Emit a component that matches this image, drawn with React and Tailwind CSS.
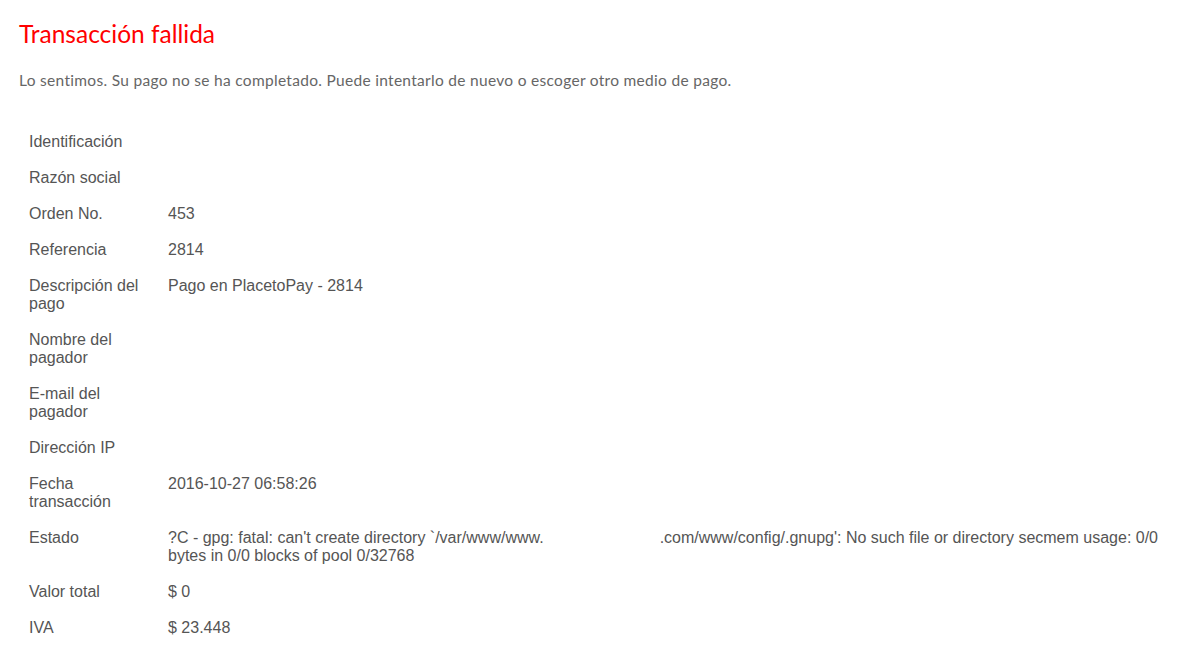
const rows = [
  ['Identificación', ''],
  ['Razón social', ''],
  ['Orden No.', '453'],
  ['Referencia', '2814'],
  ['Descripción del pago', 'Pago en PlacetoPay - 2814'],
  ['Nombre del pagador', ''],
  ['E-mail del pagador', ''],
  ['Dirección IP', ''],
  ['Fecha transacción', '2016-10-27 06:58:26'],
  ['Estado', 'estado'],
  ['Valor total', '$ 0'],
  ['IVA', '$ 23.448'],
];

export default function App() {
  return (
    <div className="bg-white min-h-[658px] pl-[19px] pr-[14px] pt-[19px] text-[#555]">
      {/* Header */}
      <h1 className="font-['Lato',sans-serif] text-[24.5px] leading-[30px] text-[#ff0000]">
        Transacción fallida
      </h1>
      <p className="mt-[21px] font-['Lato',sans-serif] text-[15.5px] tracking-[0.3px] leading-[20px] text-[#666]">
        Lo sentimos. Su pago no se ha completado. Puede intentarlo de nuevo o escoger otro medio de pago.
      </p>

      {/* Details */}
      <table className="mt-[34px] w-full font-['Liberation_Sans',Arial,sans-serif] text-[16px] leading-[18px]">
        <tbody>
          {rows.map(([label, value]) => (
            <tr key={label}>
              <td className="w-[139px] px-[10px] py-[9px] align-top">{label}</td>
              <td className="px-[10px] py-[9px] align-top">
                {value === 'estado' ? (
                  <>
                    ?C - gpg: fatal: can't create directory `/var/www/www.
                    <span className="inline-block w-[116px]"></span>
                    .com/www/config/.gnupg': No such file or directory secmem usage: 0/0 bytes in 0/0 blocks of pool 0/32768
                  </>
                ) : (
                  value
                )}
              </td>
            </tr>
          ))}
        </tbody>
      </table>
    </div>
  );
}
